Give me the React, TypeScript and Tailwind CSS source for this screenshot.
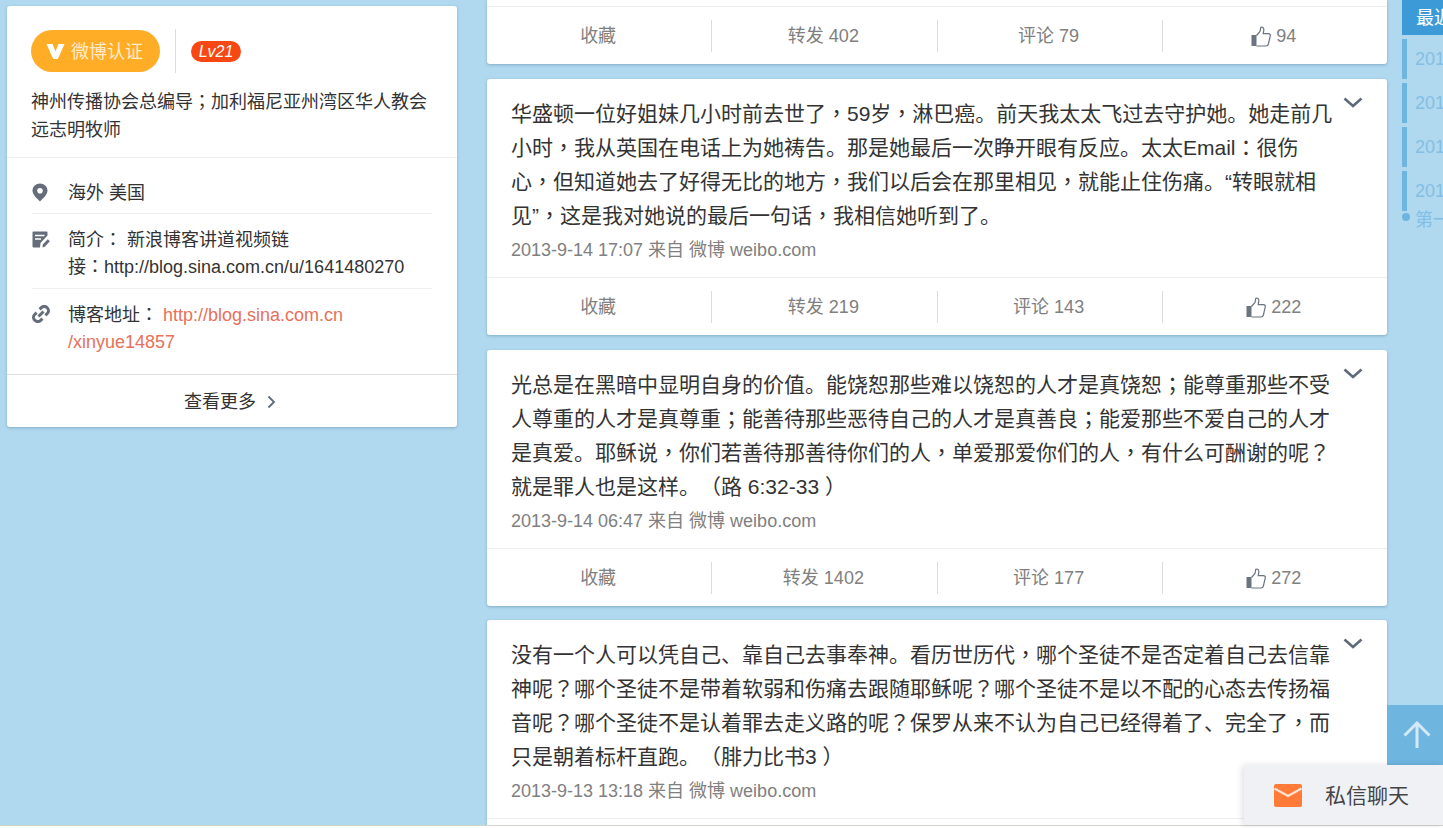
import { ReactNode } from "react";

interface Post {
  text: string;
  time: string;
  forward: number;
  comment: number;
  like: number;
  gap: string;
}

const posts: Post[] = [
  {
    text: "华盛顿一位好姐妹几小时前去世了，59岁，淋巴癌。前天我太太飞过去守护她。她走前几小时，我从英国在电话上为她祷告。那是她最后一次睁开眼有反应。太太Email：很伤心，但知道她去了好得无比的地方，我们以后会在那里相见，就能止住伤痛。“转眼就相见”，这是我对她说的最后一句话，我相信她听到了。",
    time: "2013-9-14 17:07",
    forward: 219,
    comment: 143,
    like: 222,
    gap: "mb-[15px]",
  },
  {
    text: "光总是在黑暗中显明自身的价值。能饶恕那些难以饶恕的人才是真饶恕；能尊重那些不受人尊重的人才是真尊重；能善待那些恶待自己的人才是真善良；能爱那些不爱自己的人才是真爱。耶稣说，你们若善待那善待你们的人，单爱那爱你们的人，有什么可酬谢的呢？就是罪人也是这样。（路 6:32-33 ）",
    time: "2013-9-14 06:47",
    forward: 1402,
    comment: 177,
    like: 272,
    gap: "mb-[14px]",
  },
  {
    text: "没有一个人可以凭自己、靠自己去事奉神。看历世历代，哪个圣徒不是否定着自己去信靠神呢？哪个圣徒不是带着软弱和伤痛去跟随耶稣呢？哪个圣徒不是以不配的心态去传扬福音呢？哪个圣徒不是认着罪去走义路的呢？保罗从来不认为自己已经得着了、完全了，而只是朝着标杆直跑。（腓力比书3 ）",
    time: "2013-9-13 13:18",
    forward: 0,
    comment: 0,
    like: 0,
    gap: "mb-[15px]",
  },
];

// the reference centres these marks in their box, which the TC cut of the font does
function Punct({ text }: { text: string }) {
  return (
    <>
      {text.split(/([，；：？（）])/).map((part, i) =>
        i % 2 === 1 ? (
          <span key={i} className="font-['Noto_Sans_CJK_TC'] leading-[0]">
            {part}
          </span>
        ) : (
          part
        ),
      )}
    </>
  );
}

function ThumbIcon() {
  return (
    <svg width="20" height="21" viewBox="0 0 20 21" className="shrink-0">
      <rect x="0.5" y="9" width="5" height="11" fill="#6b7280" />
      <path
        d="M5.5 9.5 L9 5.5 L9.8 1.2 C11.6 0.6 13 2 12.8 4.2 L12.2 7.6 L17.4 7.6 C19 7.6 19.6 8.8 19.2 10.2 L17.4 18 C17.1 19.4 16.2 20 15 20 L5.5 20"
        fill="none"
        stroke="#6b7280"
        strokeWidth="1.2"
      />
    </svg>
  );
}

function ActionCell({ children, last }: { children: ReactNode; last?: boolean }) {
  return (
    <div className={`flex-1 h-[32px] pt-[2px] pr-[2px] flex items-center justify-center gap-[5px] ${last ? "" : "border-r border-[#dcdcdc]"}`}>
      {children}
    </div>
  );
}

function ActionBar({ forward, comment, like }: { forward: number; comment: number; like: number }) {
  return (
    <div className="border-t border-[#eeeeee] h-[58px] flex items-center text-[18px] text-[#808080]">
      <ActionCell>收藏</ActionCell>
      <ActionCell>转发 {forward}</ActionCell>
      <ActionCell>评论 {comment}</ActionCell>
      <ActionCell last>
        <ThumbIcon />
        <span>{like}</span>
      </ActionCell>
    </div>
  );
}

function PostCard({ post }: { post: Post }) {
  return (
    <div className={`relative bg-white rounded-[3px] shadow-[0_1px_3px_rgba(50,94,128,0.35)] ${post.gap}`}>
      <svg width="20" height="11" viewBox="0 0 20 11" className="absolute right-[24px] top-[18px]">
        <path d="M1.5 1.5 L10 9 L18.5 1.5" fill="none" stroke="#5f6b78" strokeWidth="2.6" />
      </svg>
      <div className="pt-[18px] pl-[24px] pr-[52px] h-[198px]">
        <p className="text-[21px] leading-[34px] text-[#333333] w-[826px]">
          <Punct text={post.text} />
        </p>
        <p className="text-[18px] leading-[34px] text-[#808080]">{post.time} 来自 微博 weibo.com</p>
      </div>
      <ActionBar forward={post.forward} comment={post.comment} like={post.like} />
    </div>
  );
}

function Sidebar() {
  return (
    <div className="w-[450px] ml-[7px] mt-[6px] shrink-0 self-start bg-white rounded-[3px] shadow-[0_1px_3px_rgba(50,94,128,0.35)] text-[#333333] text-[18px]">
      <div className="px-[24px] pt-[23px] h-[152px] border-b border-[#eeeeee]">
        <div className="flex items-center h-[44px]">
          <div className="w-[129px] h-[42px] rounded-full bg-[#ffad26] flex items-center pl-[15px] gap-[6px]">
            <svg width="19" height="17" viewBox="0 0 19 17">
              <path d="M0.5 1 L6.5 1 L9.5 8.5 L12.5 1 L18.5 1 L11.8 16 L7.2 16 Z" fill="#ffffff" />
            </svg>
            <span className="text-[18px] pt-[3px] text-[#ffeccb]">微博认证</span>
          </div>
          <div className="w-px h-[44px] bg-[#dddddd] ml-[15px]" />
          <div className="ml-[15px] w-[50px] h-[21px] rounded-full bg-[#f74814] text-white italic text-[16px] leading-[21px] text-center">
            Lv21
          </div>
        </div>
        <p className="mt-[15px] leading-[28px] w-[402px]">
          <Punct text="神州传播协会总编导；加利福尼亚州湾区华人教会远志明牧师" />
        </p>
      </div>

      <div className="mx-[25px] border-b border-[#eeeeee] pt-[22px] pb-[6px] flex leading-[27px]">
        <div className="w-[36px] shrink-0 pt-[3px]">
          <svg width="16" height="19" viewBox="0 0 16 19">
            <path
              fillRule="evenodd"
              d="M8 0.5 C12 0.5 15.5 3.6 15.5 7.6 C15.5 11.6 11 15.8 8 18.5 C5 15.8 0.5 11.6 0.5 7.6 C0.5 3.6 4 0.5 8 0.5 Z M8 5 A2.8 2.8 0 1 0 8 10.6 A2.8 2.8 0 1 0 8 5 Z"
              fill="#656d7b"
            />
          </svg>
        </div>
        <span>海外 美国</span>
      </div>

      <div className="mx-[25px] border-b border-[#eeeeee] pt-[13px] pb-[7px] flex leading-[27px]">
        <div className="w-[36px] shrink-0 pt-[4px]">
          <svg width="18" height="17" viewBox="0 0 18 17">
            <path d="M0.5 1.5 Q0.5 0.5 1.5 0.5 L14.5 0.5 Q15.5 0.5 15.5 1.5 L15.5 4.5 L8.5 12 L8 16.5 L1.5 16.5 Q0.5 16.5 0.5 15.5 Z" fill="#656d7b" />
            <path d="M3 4.5 L12.5 4.5 M3 8 L9 8" stroke="#ffffff" strokeWidth="1.5" />
            <path d="M10.5 16.5 L10.8 13.6 L15.8 8.2 L17.8 10.2 L12.8 15.8 Z M14.5 16.5 L16 15" fill="#656d7b" />
          </svg>
        </div>
        <p className="w-[340px]">
          简介<Punct text="：" /> 新浪博客讲道视频链
          <br />
          接<Punct text="：" />http://blog.sina.com.cn/u/1641480270
        </p>
      </div>

      <div className="mx-[25px] pt-[13px] pb-[18px] flex leading-[27px]">
        <div className="w-[36px] shrink-0 pt-[3px]">
          <svg width="18" height="18" viewBox="0 0 18 18">
            <path
              d="M7.6 4.4 L9.6 2.4 C11 1 13.6 1 15.2 2.7 C16.8 4.3 16.9 6.9 15.5 8.3 L13.4 10.4 M10.4 13.6 L8.4 15.6 C7 17 4.4 17 2.8 15.3 C1.2 13.7 1.1 11.1 2.5 9.7 L4.6 7.6 M6.5 11.5 L11.5 6.5"
              fill="none"
              stroke="#656d7b"
              strokeWidth="3"
            />
          </svg>
        </div>
        <div>
          <p>
            博客地址<Punct text="：" /> <span className="text-[#e8705a]">http://blog.sina.com.cn</span>
          </p>
          <p className="text-[#e8705a]">/xinyue14857</p>
        </div>
      </div>

      <div className="border-t border-[#dddddd] h-[53px] pt-[2px] pr-[4px] flex items-center justify-center gap-[11px]">
        <span>查看更多</span>
        <svg width="9" height="14" viewBox="0 0 9 14">
          <path d="M1.5 1.5 L7 7 L1.5 12.5" fill="none" stroke="#5f6b78" strokeWidth="1.8" />
        </svg>
      </div>
    </div>
  );
}

function Timeline() {
  return (
    <div className="ml-[15px] flex-1 overflow-hidden text-[18px] whitespace-nowrap">
      <div className="h-[35px] pt-px bg-[#3c9bd7] text-white leading-[35px] pl-[14px] mb-[4px]">最近</div>
      {["2013", "2012", "2011", "2010"].map((year) => (
        <div key={year} className="h-[40px] mb-[4px] border-l-[5px] border-[#6eb5e0] pl-[8px] leading-[40px] text-[#82bfe6]">
          {year}
        </div>
      ))}
      <div className="flex items-center -mt-[5px] h-[20px] text-[#82bfe6]">
        <span className="shrink-0 self-start w-[8px] h-[8px] mt-[3px] rounded-full bg-[#6eb5e0] mr-[5px]" />
        第一条
      </div>
    </div>
  );
}

export default function App() {
  return (
    <div
      className="relative h-[828px] overflow-hidden bg-white [text-spacing-trim:space-all]"
      style={{ fontFamily: '"Liberation Sans", "Noto Sans CJK SC", sans-serif' }}
    >
      <div className="flex h-[825px] overflow-hidden bg-[#b0d8ef]">
        <Sidebar />
        <div className="w-[900px] ml-[30px] shrink-0">
          <div className="bg-white rounded-b-[3px] shadow-[0_1px_3px_rgba(50,94,128,0.35)] pt-[6px] mb-[15px]">
            <ActionBar forward={402} comment={79} like={94} />
          </div>
          {posts.map((post) => (
            <PostCard key={post.time} post={post} />
          ))}
        </div>
        <Timeline />
      </div>
      <div className="h-px bg-[#d4d4cc]" />

      <div className="absolute right-0 top-[705px] w-[56px] h-[60px] pl-[3px] bg-[#6eb5e0] flex items-center justify-center">
        <svg width="28" height="28" viewBox="0 0 28 28">
          <path d="M14 27 L14 2 M1.5 14.5 L14 2 L26.5 14.5" fill="none" stroke="#d3e9f7" strokeWidth="3" />
        </svg>
      </div>
      <div className="absolute right-0 top-[765px] w-[199px] h-[60px] bg-[#f0f1f5] shadow-[-2px_0_6px_rgba(0,0,0,0.12)] flex items-center pl-[30px]">
        <svg width="28" height="23" viewBox="0 0 28 23">
          <rect width="28" height="23" rx="2" fill="#ff7b37" />
          <path d="M0.5 4.5 L14 12 L27.5 4.5" fill="none" stroke="#ffe3d3" strokeWidth="2.4" />
        </svg>
        <span className="ml-[23px] pt-[2px] text-[21px] text-[#444444]">私信聊天</span>
      </div>
    </div>
  );
}
